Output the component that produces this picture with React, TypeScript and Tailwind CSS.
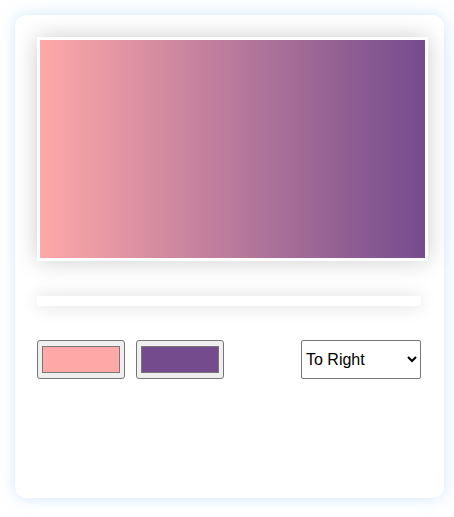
import React from 'react';

export default function App() {
  const [from, setFrom] = React.useState('#ffa8a8');
  const [to, setTo] = React.useState('#744c8e');
  const [dir, setDir] = React.useState('to right');

  return (
    <div className="w-[454px] h-[517px] bg-white p-[15px]" style={{ fontFamily: 'Arial, "Liberation Sans", sans-serif' }}>
      <div className="w-[429px] h-[483px] rounded-xl bg-white px-[22px] pt-[22px] shadow-[0_0_16px_rgba(170,210,255,0.55)]">
        {/* Preview */}
        <div
          className="w-[391px] h-[224px] border-[3px] border-white shadow-[0_0_22px_rgba(0,0,0,0.2)]"
          style={{ background: `linear-gradient(${dir}, ${from}, ${to})` }}
        />

        {/* CSS output bar */}
        <div className="mt-[35px] w-[384px] h-[10px] bg-white shadow-[0_0_18px_rgba(0,0,0,0.15)]" />

        {/* Controls */}
        <div className="mt-[34px] w-[384px] flex items-center">
          <input
            type="color"
            value={from}
            onChange={(e) => setFrom(e.target.value)}
            className="w-[88px] h-[39px] bg-[#efefef] border border-[#767676] rounded-[3px] px-[2px] py-[1px]"
          />
          <input
            type="color"
            value={to}
            onChange={(e) => setTo(e.target.value)}
            className="ml-[11px] w-[88px] h-[39px] bg-[#efefef] border border-[#767676] rounded-[3px] px-[2px] py-[1px]"
          />
          <select
            value={dir}
            onChange={(e) => setDir(e.target.value)}
            className="ml-auto w-[120px] h-[39px] border border-[#767676] rounded-[2px] bg-white text-black text-base pl-0 appearance-auto"
          >
            <option value="to right">To Right</option>
            <option value="to left">To Left</option>
            <option value="to bottom">To Bottom</option>
            <option value="to top">To Top</option>
          </select>
        </div>
      </div>
    </div>
  );
}
